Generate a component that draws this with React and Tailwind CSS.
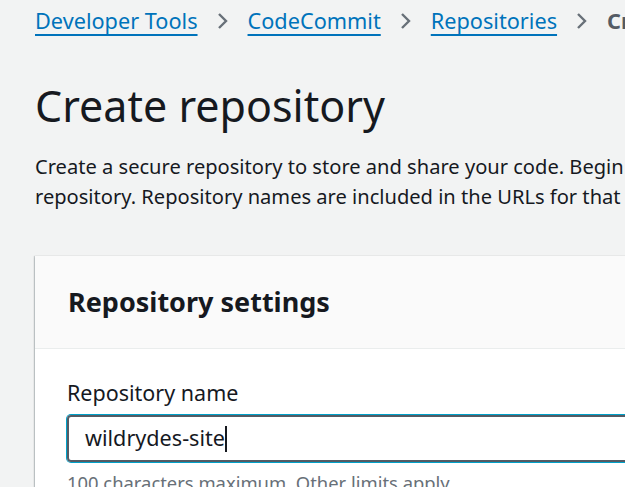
import React from "react";

function Chevron() {
  return (
    <svg width="14" height="20" viewBox="0 0 14 20" className="mx-[18px] shrink-0">
      <path d="M3 3 L10 10 L3 17" fill="none" stroke="#687078" strokeWidth="2.4" />
    </svg>
  );
}

export default function App() {
  const crumbs = ["Developer Tools", "CodeCommit", "Repositories"];

  return (
    <div className="w-[625px] h-[487px] overflow-hidden bg-[#f2f3f3] text-[#16191f] font-['Noto_Sans',sans-serif]">
      <div className="pl-[35px] w-[900px]">
        {/* breadcrumbs */}
        <nav className="flex items-center h-[42px] text-[21.7px] whitespace-nowrap">
          {crumbs.map((c) => (
            <React.Fragment key={c}>
              <a className="text-[#0073bb] underline decoration-2 underline-offset-[5px]">{c}</a>
              <Chevron />
            </React.Fragment>
          ))}
          <span className="font-bold text-[#545b64]">Create repository</span>
        </nav>

        <h1 className="mt-[36px] text-[43px] leading-[56px] font-normal">Create repository</h1>

        <p className="mt-[18px] text-[20.1px] leading-[30px] whitespace-nowrap">
          Create a secure repository to store and share your code. Begin by typing a repository name and a description for your
          <br />
          repository. Repository names are included in the URLs for that repository.
        </p>

        {/* card */}
        <div className="mt-[44px] bg-white shadow-[0_1px_2px_rgba(0,28,36,0.3),-1px_0_1px_rgba(0,28,36,0.15)] w-[900px]">
          <div className="bg-[#fafafa] border-b border-[#eaeded] h-[93px] flex items-center px-[33px]">
            <h2 className="text-[27px] font-bold">Repository settings</h2>
          </div>
          <div className="px-[32px] pt-[29px] pb-[30px]">
            <label className="block text-[21.5px] leading-[30px]">Repository name</label>
            <div className="mt-[7px] h-[47px] rounded-[4px] border-2 border-[#545b64] ring-1 ring-[#00a1c9] flex items-center pl-[16px]">
              <span className="text-[21.6px]">wildrydes-site</span>
              <span className="w-[2px] h-[26px] bg-[#16191f]" />
            </div>
            <div className="mt-[8px] text-[18.4px] leading-[26px] text-[#687078]">100 characters maximum. Other limits apply.</div>
          </div>
        </div>
      </div>
    </div>
  );
}
